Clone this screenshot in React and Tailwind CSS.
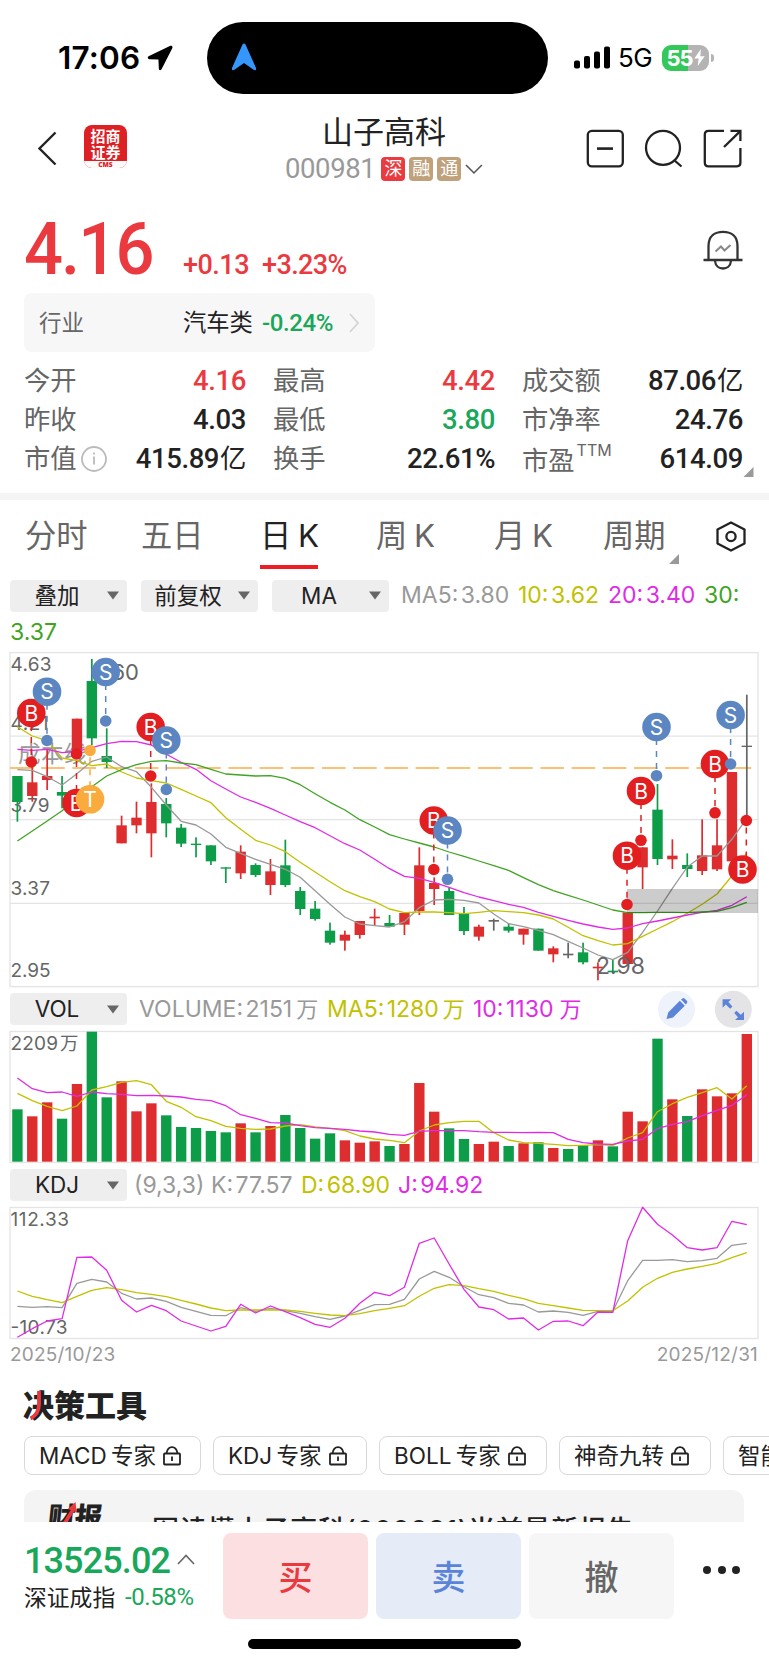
const CANDLES = [
  // [type, open/close top, open/close bottom, wick top, wick bottom]
  ['g', 408, 486, 408, 545], ['r', 427, 468, 380, 485], ['r', 408, 420, 330, 450], ['g', 456, 467, 408, 505],
  ['r', 236, 345, 236, 345], ['g', 123, 295, 57, 315], ['g', 348, 366, 265, 384], ['r', 556, 610, 527, 610],
  ['r', 533, 556, 485, 580], ['r', 486, 580, 430, 652], ['g', 492, 550, 474, 592], ['g', 563, 611, 552, 621],
  ['g', 611, 615, 592, 652], ['g', 616, 664, 616, 675], ['g', 682, 686, 682, 729], ['r', 635, 700, 616, 717],
  ['g', 675, 705, 670, 711], ['r', 694, 735, 657, 765], ['g', 676, 735, 599, 741], ['g', 753, 807, 741, 825],
  ['g', 806, 837, 783, 842], ['g', 872, 908, 848, 914], ['r', 884, 902, 872, 932], ['r', 843, 885, 843, 896],
  ['r', 830, 835, 806, 858], ['g', 849, 860, 825, 860], ['r', 819, 854, 819, 885], ['r', 676, 813, 622, 825],
  ['r', 729, 747, 712, 795], ['g', 753, 825, 743, 825], ['g', 821, 873, 801, 885], ['r', 860, 890, 854, 902],
  ['k', 840, 845, 836, 872], ['g', 860, 872, 850, 878], ['r', 866, 884, 866, 914], ['g', 866, 932, 866, 932],
  ['r', 925, 943, 919, 967], ['k', 941, 946, 908, 955], ['g', 937, 967, 908, 973], ['r', 980, 985, 967, 1021],
  ['g', 992, 997, 960, 1000], ['r', 817, 972, 817, 972], ['r', 622, 682, 622, 747], ['g', 509, 657, 432, 675],
  ['r', 647, 658, 598, 687], ['g', 675, 687, 640, 711], ['r', 646, 693, 538, 705], ['r', 616, 688, 538, 693],
  ['r', 396, 664, 396, 664], ['k', 317, 321, 164, 540],
];

const MA5 = [389, 391, 410, 435, 401, 364, 351, 380, 395, 442, 495, 544, 555, 582, 622, 640, 658, 673, 688, 712, 752, 793, 831, 852, 857, 861, 845, 803, 780, 778, 781, 789, 822, 851, 860, 871, 884, 904, 924, 945, 959, 937, 877, 813, 745, 681, 648, 648, 598, 535];
const MA10 = [260, 288, 302, 354, 362, 377, 372, 396, 414, 422, 429, 448, 468, 488, 533, 568, 601, 615, 635, 667, 696, 725, 752, 770, 785, 807, 818, 816, 816, 818, 821, 817, 812, 815, 818, 825, 837, 862, 887, 902, 915, 911, 889, 867, 845, 820, 793, 762, 708, 638];
const MA20 = [328, 331, 328, 338, 334, 323, 311, 304, 305, 315, 343, 367, 388, 422, 447, 471, 487, 505, 525, 545, 563, 587, 611, 630, 658, 686, 709, 715, 727, 742, 758, 771, 782, 793, 802, 817, 829, 841, 852, 861, 868, 864, 851, 843, 834, 825, 817, 811, 796, 770];
const MA30 = [603, 573, 543, 512, 475, 440, 408, 389, 374, 364, 362, 369, 374, 388, 402, 405, 408, 407, 415, 434, 461, 487, 510, 539, 561, 584, 597, 609, 621, 636, 649, 663, 677, 691, 713, 734, 752, 766, 780, 795, 810, 818, 818, 817, 817, 818, 816, 814, 803, 787];

const VOLUMES = [388, 409, 367, 416, 312, 155, 352, 304, 394, 370, 406, 441, 444, 453, 457, 430, 457, 438, 405, 444, 476, 460, 481, 488, 484, 498, 492, 309, 395, 445, 477, 492, 485, 498, 490, 487, 504, 507, 496, 481, 499, 395, 424, 176, 358, 408, 328, 349, 340, 162];
const VOL_COLORS = 'grrgrggrrrgggggrgrggggrrrgrrrggrrgrgrggrgrrgrgrrrr';
const VOL_MA5 = [340, 362, 379, 392, 378, 330, 320, 307, 302, 314, 364, 382, 410, 422, 439, 445, 448, 447, 438, 434, 441, 445, 452, 468, 477, 481, 488, 453, 435, 428, 424, 424, 458, 480, 488, 490, 493, 497, 496, 494, 496, 474, 458, 395, 371, 352, 338, 323, 357, 317];
const VOL_MA10 = [294, 326, 338, 336, 349, 336, 341, 343, 347, 346, 348, 351, 358, 362, 377, 404, 415, 428, 429, 437, 443, 445, 448, 453, 456, 463, 466, 454, 452, 452, 452, 455, 457, 457, 458, 457, 458, 478, 488, 492, 493, 483, 478, 446, 433, 425, 407, 391, 376, 344];

const KDJ_K = [409, 412, 410, 413, 340, 328, 336, 370, 387, 384, 394, 412, 424, 436, 437, 413, 424, 415, 422, 430, 440, 448, 438, 421, 404, 403, 388, 327, 304, 322, 350, 374, 383, 400, 405, 426, 423, 427, 436, 424, 424, 332, 271, 271, 269, 275, 272, 265, 226, 220];
const KDJ_D = [363, 379, 389, 398, 379, 361, 353, 359, 368, 373, 380, 391, 402, 414, 422, 420, 420, 420, 420, 424, 430, 435, 437, 431, 422, 415, 407, 379, 355, 344, 347, 356, 364, 376, 386, 400, 407, 414, 421, 422, 422, 393, 352, 325, 307, 297, 289, 280, 263, 248];
const KDJ_J = [502, 476, 453, 446, 262, 261, 301, 391, 426, 406, 422, 453, 468, 483, 469, 403, 429, 408, 425, 443, 463, 472, 445, 400, 367, 377, 352, 220, 204, 282, 358, 411, 419, 447, 444, 480, 454, 453, 467, 426, 427, 212, 112, 163, 195, 233, 240, 233, 154, 164];

// [letter, badge x, badge y, dot x, dot y]
const MARKERS = [
  ['B', 31.3, 73, 31.3, 122], ['S', 47, 51.7, 47, 100.5], ['B', 76.5, 163, 76.5, 114], ['T', 90, 159.3, 90, 110.5],
  ['S', 105.7, 32, 105.7, 81], ['B', 150.7, 87, 150.7, 136], ['S', 166.3, 100.5, 166.3, 149.5],
  ['B', 433.8, 180.5, 433.8, 229.5], ['S', 447.5, 190.5, 447.5, 239.3], ['B', 627, 215.7, 627, 264.5],
  ['B', 641, 151, 641, 200.3], ['S', 656.5, 87, 656.5, 135.7], ['B', 715, 124, 715, 172.8],
  ['S', 730.6, 75, 730.6, 124], ['B', 742.5, 229.5, 746.3, 180.5],
];

const COLORS = { r: '#dd2d2f', g: '#0d9c47', k: '#666666' };
const MARKER_COLORS = { B: '#e31e20', S: '#5b86c2', T: '#f9ab3e' };

const px = (i) => 17.4 + i * 14.886;
const points = (list) => list.map((v, i) => `${px(i).toFixed(1)},${(v / 3).toFixed(1)}`).join(' ');

function Line({ data, color }) {
  return <polyline points={points(data)} fill="none" stroke={color} strokeWidth="1.3" strokeLinejoin="round" />;
}

function AxisText({ x = 10.5, y, size = 19, color = '#666', length, children }) {
  return (
    <text x={x} y={y} fontSize={size} fill={color} textLength={length} lengthAdjust="spacing">
      {children}
    </text>
  );
}

function CandleChart() {
  return (
    <svg className="block shrink-0" width="769" height="350" viewBox="0 0 769 350">
      <rect x="10" y="12.6" width="748" height="334" fill="none" stroke="#e4e4e4" strokeWidth="1.3" />
      {[96.2, 179.6, 263.3].map((y) => (
        <line key={y} x1="10" x2="758" y1={y} y2={y} stroke="#e4e4e4" strokeWidth="1.3" />
      ))}
      <AxisText y="31" length="41">4.63</AxisText>
      <AxisText y="90" length="38">4.21</AxisText>
      <AxisText y="172.4" length="39">3.79</AxisText>
      <AxisText y="254.8" length="39.5">3.37</AxisText>
      <AxisText y="336.8" length="40">2.95</AxisText>
      <AxisText x="18" y="122" size="22.5" color="#999" length="68.5">成本线</AxisText>
      <line x1="10" x2="752" y1="128" y2="128" stroke="#fbc276" strokeWidth="2" strokeDasharray="23.6 7.6" />
      {CANDLES.map(([type, top, bottom, high, low], i) => (
        <g key={i} fill={COLORS[type]}>
          <rect x={px(i) - 0.85} y={high / 3} width="1.7" height={(low - high) / 3} />
          <rect x={px(i) - 5.2} y={top / 3} width="10.4" height={(bottom - top) / 3} />
        </g>
      ))}
      <Line data={MA5} color="#999" />
      <Line data={MA10} color="#c1c100" />
      <Line data={MA20} color="#e02be6" />
      <Line data={MA30} color="#3fa422" />
      <rect x="627" y="249" width="131" height="24" fill="#000" opacity="0.2" />
      <AxisText x="92" y="39.6" size="22" length="47">4.60</AxisText>
      <AxisText x="596" y="334.4" size="23" length="49">2.98</AxisText>
      {MARKERS.map(([letter, bx, by, dx, dy], i) => (
        <g key={i}>
          <line x1={dx} x2={dx} y1={by} y2={dy} stroke={MARKER_COLORS[letter]} strokeWidth="1.5" strokeDasharray="6 6" />
          <circle cx={dx} cy={dy} r="5.8" fill={MARKER_COLORS[letter]} />
          <circle cx={bx} cy={by} r="14.3" fill={MARKER_COLORS[letter]} />
          <text x={bx} y={by + 7.6} fontSize="21" fill="#fff" textAnchor="middle">{letter}</text>
        </g>
      ))}
    </svg>
  );
}

function VolumeChart() {
  return (
    <svg className="block shrink-0" width="769" height="138" viewBox="0 48 769 138">
      <rect x="10" y="51.5" width="748" height="131" fill="none" stroke="#e4e4e4" strokeWidth="1.3" />
      <AxisText y="70.2" length="47.5">2209</AxisText>
      <AxisText x="60" y="70.2" size="18.5">万</AxisText>
      {VOLUMES.map((v, i) => (
        <rect key={i} x={px(i) - 5.2} y={v / 3} width="10.4" height={(545 - v) / 3} fill={COLORS[VOL_COLORS[i]]} />
      ))}
      <Line data={VOL_MA5} color="#c1c100" />
      <Line data={VOL_MA10} color="#e02be6" />
    </svg>
  );
}

function KdjChart() {
  return (
    <svg className="block shrink-0" width="769" height="138" viewBox="0 34 769 138">
      <rect x="10" y="37.5" width="748" height="131" fill="none" stroke="#e4e4e4" strokeWidth="1.3" />
      <AxisText y="56" length="58.5">112.33</AxisText>
      <AxisText y="164" length="57">-10.73</AxisText>
      <Line data={KDJ_K} color="#999" />
      <Line data={KDJ_D} color="#c1c100" />
      <Line data={KDJ_J} color="#e02be6" />
    </svg>
  );
}

function StatusBar() {
  return (
    <div className="flex h-[100px] shrink-0 items-center">
      <div className="flex w-[207px] items-center gap-2 pt-[15px] pl-[58px] text-black">
        <span className="w-[81px] text-[31.5px] leading-none font-semibold tracking-[0.2px]">17:06</span>
        <svg className="shrink-0" width="26" height="26" viewBox="0 0 25 25">
          <path d="M22.5 0.8 L1.5 10.8 Q-0.4 12.8 2 13.8 L11 14 L11.4 23 Q12.2 25.4 14 23.4 L24.4 2.8 Q24.8 0 22.5 0.8Z" fill="#000" />
        </svg>
      </div>
      <div className="mt-4 flex h-[72px] w-[341px] items-center rounded-full bg-black pl-6">
        <svg className="mb-[3px]" width="26" height="28" viewBox="0 0 26 28">
          <path d="M11.5 1.5 Q13 -0.5 14.5 1.5 L25 25 Q25.6 28.2 22.6 26.8 L13 20 L3.4 26.8 Q0.4 28.2 1 25Z" fill="#3596fb" />
        </svg>
      </div>
      <div className="flex items-center pt-[15px] pl-[26px]">
        <svg width="36" height="23" viewBox="0 0 36 23">
          <rect x="0" y="14.5" width="6" height="8" rx="2" />
          <rect x="10" y="10" width="6" height="12.5" rx="2" />
          <rect x="20" y="5.5" width="6" height="17" rx="2" />
          <rect x="30" y="0.5" width="6" height="22" rx="2" />
        </svg>
        <span className="ml-2 w-[44px] text-[26px] leading-none tracking-[-0.6px]">5G</span>
        <div className="flex h-[26px] w-[47px] items-center justify-center overflow-hidden rounded-[9px] bg-linear-to-r from-[#34c759] from-55% to-[#b4b4b4] to-55% text-white">
          <span className="text-[22px] leading-none font-bold tracking-[-1px]">55</span>
          <svg className="ml-px" width="11" height="17" viewBox="0 0 11 18">
            <path d="M7 0 L0 10 H4.6 L3.6 18 L11 7.6 H6.3Z" fill="#fff" />
          </svg>
        </div>
        <span className="ml-0.5 h-2 w-[3px] rounded-r-full bg-[#b4b4b4]" />
      </div>
    </div>
  );
}

function Header() {
  return (
    <div className="flex h-[100px] shrink-0 items-start text-[#222]">
      <svg className="mt-[31px] ml-[37px]" width="20" height="35" viewBox="0 0 20 35" fill="none" stroke="#222" strokeWidth="2.4">
        <path d="M18.5 1.5 L2.5 17.5 L18.5 33.5" />
      </svg>
      <div className="mt-[25px] ml-[27px] flex h-[43px] w-[43px] flex-col items-center overflow-hidden rounded-lg bg-[#dc2024] font-[Noto_Sans_CJK_SC] font-bold text-white">
        <span className="mt-[2.5px] text-[15px] leading-[16px]">招商</span>
        <span className="text-[15px] leading-[16px]">证券</span>
        <span className="mt-auto w-full bg-[#fafafa] text-center font-[Open_Sans] text-[6.5px] leading-[7.5px] font-extrabold text-[#dc2024]">CMS</span>
      </div>
      <div className="mt-4 ml-[158px] flex w-[198px] flex-col">
        <div className="pl-[37px] text-[31px] leading-[31px]">山子高科</div>
        <div className="mt-[7px] flex h-[30px] items-center gap-1 text-[#999]">
          <span className="w-[93px] font-[Roboto] text-[27.5px] leading-none tracking-[-0.4px]">000981</span>
          <span className="h-6 w-6 rounded bg-[#e93b40] text-center text-[18px] leading-6 text-white">深</span>
          <span className="h-6 w-6 rounded bg-[#bfa27c] text-center text-[18px] leading-6 text-white">融</span>
          <span className="h-6 w-6 rounded bg-[#bfa27c] text-center text-[18px] leading-6 text-white">通</span>
          <svg width="18" height="11" viewBox="0 0 18 11" fill="none" stroke="#555" strokeWidth="1.6">
            <path d="M1 1 L9 9 L17 1" />
          </svg>
        </div>
      </div>
      <svg className="mt-[28px] ml-[103px]" width="156" height="42" viewBox="0 0 156 42" fill="none" stroke="#222" strokeWidth="2.3">
        <rect x="1.8" y="2.8" width="35" height="35.5" rx="4" />
        <path d="M11 20.6 H27" strokeWidth="2.6" />
        <circle cx="77" cy="19.8" r="17" />
        <path d="M88 32 L95.5 38.5" />
        <path d="M138 2.8 H122.5 Q118.8 2.8 118.8 6.6 V34.5 Q118.8 38.3 122.5 38.3 H151 Q154.4 38.3 154.4 34.8 V20" />
        <path d="M144.5 2.8 H154.4 V13" />
        <path d="M154 3.4 L138 19" />
      </svg>
    </div>
  );
}

function PriceBlock() {
  return (
    <div className="h-[160px] shrink-0 px-6">
      <div className="flex h-[93px] items-start font-[Roboto] font-medium text-[#eb3a3f]">
        <span className="mt-[13px] w-[159px] origin-left scale-x-94 text-[73px] leading-[73px] tracking-[-2px]">4.16</span>
        <span className="mt-[51px] w-[79px] text-[27px] leading-[28px] tracking-[-0.5px]">+0.13</span>
        <span className="mt-[51px] w-[100px] text-[27px] leading-[28px] tracking-[-0.6px]">+3.23%</span>
        <svg className="mt-[30px] ml-auto mr-[2px]" width="40" height="41" viewBox="0 0 40 41" fill="none" stroke="#333" strokeWidth="2.3">
          <path d="M5.5 29 V16 C5.5 6 12 1.8 20 1.8 S34.5 6 34.5 16 V29" />
          <path d="M0.5 30 H39.5" strokeWidth="2.6" />
          <path d="M12 31 C13 41 27 41 28 31" />
          <path d="M12.5 21.5 L18 16.5 L21.5 20.5 L27.5 15" stroke="#888" strokeWidth="2" />
        </svg>
      </div>
      <div className="flex h-[59px] w-[351px] items-center rounded-lg bg-[#f7f7f7] pt-px pl-[15px] text-[22.5px]">
        <span className="w-[144px] text-[#666]">行业</span>
        <span className="w-[79px] text-[23.3px] text-[#222]">汽车类</span>
        <span className="w-[87px] font-[Roboto] text-[24px] font-medium tracking-[-0.4px] text-[#19a75a]">-0.24%</span>
        <svg width="10" height="20" viewBox="0 0 10 20" fill="none" stroke="#d4d4d4" strokeWidth="1.8">
          <path d="M1 1 L9 10 L1 19" />
        </svg>
      </div>
    </div>
  );
}

const QUOTES = [
  { label: '今开', value: '4.16', tone: 'text-[#eb3a3f]' },
  { label: '最高', value: '4.42', tone: 'text-[#eb3a3f]' },
  { label: '成交额', value: '87.06亿', tone: 'text-[#222]' },
  { label: '昨收', value: '4.03', tone: 'text-[#222]' },
  { label: '最低', value: '3.80', tone: 'text-[#19a75a]' },
  { label: '市净率', value: '24.76', tone: 'text-[#222]' },
  { label: '市值', value: '415.89亿', tone: 'text-[#222]', info: true },
  { label: '换手', value: '22.61%', tone: 'text-[#222]' },
  { label: '市盈', value: '614.09', tone: 'text-[#222]', sup: 'TTM' },
];

function QuoteGrid() {
  return (
    <div className="relative h-[133px] shrink-0 pt-px">
      <div className="grid grid-cols-[222px_222px_221px] gap-x-[27px] pl-6">
        {QUOTES.map((q) => (
          <div key={q.label} className="flex h-[39px] items-center text-[26.3px] whitespace-nowrap">
            <span className={q.sup ? 'pt-1 text-[#666]' : 'text-[#666]'}>{q.label}</span>
            {q.info && (
              <svg className="ml-1" width="26" height="26" viewBox="0 0 26 26" fill="none" stroke="#bbb" strokeWidth="1.8">
                <circle cx="13" cy="13" r="12" />
                <path d="M13 10.5 V18.5 M13 6.5 V8.5" />
              </svg>
            )}
            {q.sup && <span className="mb-[18px] ml-0.5 text-[16px] leading-none text-[#666]">{q.sup}</span>}
            <span className={`ml-auto font-[Roboto,Noto_Sans_CJK_SC] text-[27.5px] font-medium tracking-[-0.4px] ${q.tone}`}>
              {q.value.replace('亿', '')}
              {q.value.endsWith('亿') && <span className="ml-px text-[26.3px] font-normal">亿</span>}
            </span>
          </div>
        ))}
      </div>
      <svg className="absolute top-[107px] left-[743px]" width="11" height="10" viewBox="0 0 11 10">
        <path d="M10.5 0 V10 H0.5Z" fill="#999" />
      </svg>
    </div>
  );
}

function Tabs() {
  return (
    <div className="box-content flex h-[72px] shrink-0 items-start border-t-[7px] border-[#f4f4f4] text-[31.3px] leading-[73px] [word-spacing:-2px] whitespace-nowrap text-[#666]">
      <span className="w-[115px] pl-[25px]">分时</span>
      <span className="w-[119px] pl-[26px]">五日</span>
      <div className="relative ml-[26px] w-[58px] text-center text-[#222]">
        日 K
        <span className="absolute top-[65px] left-0 h-1 w-[58px] bg-[#ee1d23]" />
      </div>
      <span className="ml-[58px] w-[118px]">周 K</span>
      <span className="w-[109px]">月 K</span>
      <div className="relative w-[113px]">
        周期
        <svg className="absolute top-[54px] left-[66px]" width="11" height="10" viewBox="0 0 11 10">
          <path d="M10 0 V10 H0Z" fill="#999" />
        </svg>
      </div>
      <svg className="mt-[21px]" width="30" height="31" viewBox="0 0 30 31" fill="none" stroke="#222" strokeWidth="2.3" strokeLinejoin="round">
        <path d="M15 1.5 L28.5 8.5 V22.5 L15 29.5 L1.5 22.5 V8.5Z" />
        <circle cx="15" cy="15.5" r="4.6" />
      </svg>
    </div>
  );
}

function Picker({ label }) {
  return (
    <div className="flex h-8 w-[117px] shrink-0 items-center rounded bg-[#eee] pr-2 text-[22.5px] text-[#222]">
      <span className="flex-1 pr-[3px] text-center">{label}</span>
      <svg width="12" height="9" viewBox="0 0 12 9">
        <path d="M0 0.5 H12 L6 8.5Z" fill="#666" />
      </svg>
    </div>
  );
}

function Tool({ width, children }) {
  return (
    <div className={`flex h-[39px] shrink-0 items-center gap-[7px] rounded-lg border-[1.5px] border-[#d9d9d9] pl-3.5 text-[22.5px] [word-spacing:-2px] whitespace-nowrap text-[#222] ${width}`}>
      <span>{children}</span>
      <svg className="shrink-0" width="18" height="20" viewBox="0 0 18 20" fill="none" stroke="#222" strokeWidth="1.8">
        <rect x="1" y="7.5" width="16" height="11" rx="0.8" />
        <path d="M3.5 7.5 Q4.5 1.2 9 1.2 T14.5 7.5 M9 10.5 V15" />
      </svg>
    </div>
  );
}

function Tools() {
  return (
    <div className="h-[152px] shrink-0 overflow-hidden pl-6">
      <div className="relative mt-[15px] -ml-px h-[51px] w-[130px] font-[Noto_Sans_CJK_SC] text-[31px] leading-[38px] font-black text-[#222]">
        决策工具
        <svg className="absolute top-[6px] left-[6px]" width="14" height="30" viewBox="0 0 14 30" fill="none" stroke="#eb3a3f" strokeWidth="3.8">
          <path d="M10 0 V13 Q10 23 1.5 27.5" />
        </svg>
      </div>
      <div className="flex w-[900px] gap-3">
        <Tool width="w-[177px]">MACD 专家</Tool>
        <Tool width="w-[154px]">KDJ 专家</Tool>
        <Tool width="w-[168px]">BOLL 专家</Tool>
        <Tool width="w-[152px]">神奇九转</Tool>
        <Tool width="w-[152px]">智能盯盘</Tool>
      </div>
      <div className="mt-[15px] flex h-[90px] w-[720px] items-start rounded-xl bg-[#f4f4f4]">
        <div className="relative mt-[10px] ml-[24px] w-[104px] -skew-x-6 text-[27.5px] leading-[34px] font-black tracking-[-0.8px] text-[#222]">
          财报
          <svg className="absolute top-[2px] left-[11px]" width="18" height="28" viewBox="0 0 18 28">
            <path d="M1 27 L11 8 L8 7 L15 0 L17 10 L14.5 9.5 L5 28Z" fill="#eb3a3f" />
          </svg>
        </div>
        <span className="mt-[24px] text-[27px] leading-[34px] font-medium tracking-[0.65px] whitespace-nowrap text-[#222]">图读懂山子高科(000981)当前最新报告</span>
      </div>
    </div>
  );
}

function BottomBar() {
  return (
    <div className="flex h-[143px] shrink-0 flex-col bg-white">
      <div className="flex h-[97px] pt-[11px] pl-6">
        <div className="w-[199px]">
          <div className="mt-1.5 flex items-center gap-[7px]">
            <span className="w-[146px] font-[Roboto] text-[36px] leading-[44px] font-medium tracking-[-0.9px] text-[#19a75a]">13525.02</span>
            <svg className="mb-1" width="18" height="11" viewBox="0 0 18 11" fill="none" stroke="#666" strokeWidth="1.6">
              <path d="M1 10 L9 1.5 L17 10" />
            </svg>
          </div>
          <div className="flex text-[22.8px] leading-[29px] text-[#222]">
            <span className="w-[101px]">深证成指</span>
            <span className="font-[Roboto] text-[24px] tracking-[-0.4px] text-[#19a75a]">-0.58%</span>
          </div>
        </div>
        <div className="flex gap-2 text-center text-[34px] leading-[90px] font-medium">
          <div className="h-[86px] w-[145px] rounded-lg bg-[#fce0e1] text-[#eb3a3f]">买</div>
          <div className="h-[86px] w-[145px] rounded-lg bg-[#e5ecf8] text-[#5b84d8]">卖</div>
          <div className="h-[86px] w-[145px] rounded-lg bg-[#f6f6f6] text-[#666]">撤</div>
        </div>
        <div className="mt-[33px] ml-[29px] flex h-2 gap-[6.5px]">
          <span className="h-2 w-2 rounded-full bg-[#222]" />
          <span className="h-2 w-2 rounded-full bg-[#222]" />
          <span className="h-2 w-2 rounded-full bg-[#222]" />
        </div>
      </div>
      <div className="mt-5 ml-[248px] h-2.5 w-[273px] rounded-full bg-black" />
    </div>
  );
}

export default function App() {
  return (
    <div className="flex h-[1665px] w-[769px] flex-col overflow-hidden bg-white font-[Inter,Noto_Sans_CJK_SC,sans-serif]">
      <StatusBar />
      <Header />
      <PriceBlock />
      <QuoteGrid />
      <Tabs />

      <div className="h-[68px] shrink-0 pl-2.5 text-[23px] [word-spacing:-4px] whitespace-nowrap">
        <div className="flex h-[47px] items-center gap-3.5">
          <Picker label="叠加" />
          <Picker label="前复权" />
          <Picker label="MA" />
          <div className="-ml-0.5 flex">
            <span className="w-[117px] text-[#999]">MA5: 3.80</span>
            <span className="w-[90px] text-[#c1c100]">10: 3.62</span>
            <span className="w-[96px] text-[#e02be6]">20: 3.40</span>
            <span className="text-[#3fa422]">30:</span>
          </div>
        </div>
        <div className="leading-[26px] text-[#3fa422]">3.37</div>
      </div>
      <CandleChart />

      <div className="flex h-[38px] shrink-0 items-center pl-2.5 text-[23px] [word-spacing:-4px] whitespace-nowrap">
        <Picker label="VOL" />
        <span className="ml-3 w-[188px] text-[#999]">VOLUME: 2151<span className="ml-1 text-[22px]">万</span></span>
        <span className="w-[146px] text-[#c1c100]">MA5: 1280<span className="ml-1 text-[22px]">万</span></span>
        <span className="w-[185px] text-[#e02be6]">10: 1130<span className="ml-1.5 text-[22px]">万</span></span>
        <svg width="94" height="38" viewBox="0 0 94 38">
          <circle cx="18.5" cy="19.3" r="18.5" fill="#edf2fb" />
          <path d="M8.5 29 L10.2 22.5 L21.8 10.8 L26.8 15.8 L15 27.4Z M23 9.6 L24.5 8.4 Q25.6 7.6 26.8 8.8 L28.8 10.8 Q29.8 12 28.8 13.2 L27.8 14.6Z" fill="#5b84d8" />
          <circle cx="75.3" cy="19.3" r="18.5" fill="#e4e4e6" />
          <path d="M64.6 9.2 H73.2 L70.4 12 L74.4 16.6 L72.2 18.8 L67.8 14.6 L64.6 17.8Z M86 30 H77 L80 27.2 L76.2 23 L78.4 20.8 L82.8 24.8 L86 21.8Z" fill="#5b84d8" />
        </svg>
      </div>
      <VolumeChart />

      <div className="flex h-[38px] shrink-0 items-center pl-2.5 text-[23px] [word-spacing:-4px] whitespace-nowrap">
        <Picker label="KDJ" />
        <span className="ml-[7px] w-[77px] text-[#999]">(9,3,3)</span>
        <span className="w-[90px] text-[#999]">K: 77.57</span>
        <span className="w-[97px] text-[#c1c100]">D: 68.90</span>
        <span className="text-[#e02be6]">J: 94.92</span>
      </div>
      <KdjChart />
      <div className="flex h-[28px] shrink-0 justify-between pr-[11px] pl-2.5 text-[19px] leading-[25px] tracking-[0.2px] text-[#999]">
        <span>2025/10/23</span>
        <span>2025/12/31</span>
      </div>

      <Tools />
      <BottomBar />
    </div>
  );
}
